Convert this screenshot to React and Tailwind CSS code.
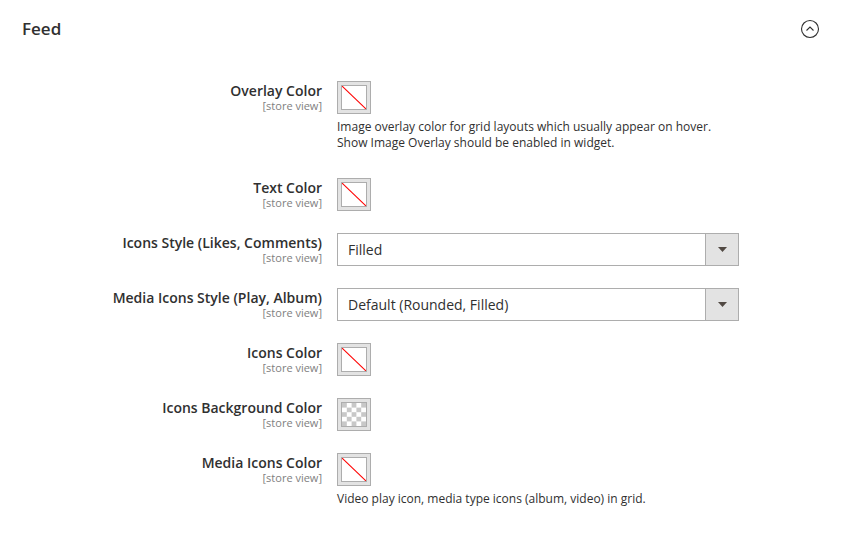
import React from "react";

const rows = [
  { label: "Overlay Color", type: "swatch", note: ["Image overlay color for grid layouts which usually appear on hover.", "Show Image Overlay should be enabled in widget."] },
  { label: "Text Color", type: "swatch" },
  { label: "Icons Style (Likes, Comments)", type: "select", value: "Filled" },
  { label: "Media Icons Style (Play, Album)", type: "select", value: "Default (Rounded, Filled)" },
  { label: "Icons Color", type: "swatch" },
  { label: "Icons Background Color", type: "swatch", transparent: true },
  { label: "Media Icons Color", type: "swatch", note: ["Video play icon, media type icons (album, video) in grid."] },
];

const Swatch = ({ transparent }) => (
  <div className="w-[34px] h-[33px] border border-[#adadad] bg-[#e3e3e3] p-[3px]">
    <div className="w-full h-full border border-[#adadad] bg-white overflow-hidden">
      {transparent ? (
        <svg width="24" height="23" viewBox="0 0 24 23" className="block">
          {Array.from({ length: 25 }).map((_, i) => {
            const r = Math.floor(i / 5);
            const c = i % 5;
            return (r + c) % 2 === 0 ? (
              <rect key={i} x={c * 4.8} y={r * 4.6} width="4.8" height="4.6" fill="#c8c8c8" />
            ) : null;
          })}
        </svg>
      ) : (
        <svg width="24" height="23" viewBox="0 0 24 23" className="block">
          <polygon points="0,0 0.75,0 24,22.3 24,23 23.25,23 0,0.7" fill="#ff0000" />
        </svg>
      )}
    </div>
  </div>
);

const Select = ({ value }) => (
  <div className="w-[402px] h-[33px] border border-[#adadad] bg-white flex items-stretch">
    <div className="flex-1 pl-[10px] flex items-center text-[14px] text-[#303030]">{value}</div>
    <div className="w-[33px] border-l border-[#adadad] bg-[#e3e3e3] flex items-center justify-center">
      <svg width="9" height="5" viewBox="0 0 9 5">
        <path d="M0 0 L9 0 L4.5 5 Z" fill="#514943" />
      </svg>
    </div>
  </div>
);

export default function App() {
  return (
    <div className="w-[850px] h-[546px] bg-white overflow-hidden" style={{ fontFamily: "'Open Sans', sans-serif" }}>
      <div className="flex items-center justify-between pl-[22px] pr-[30px] pt-[16px] h-[42px]">
        <div className="text-[17px] font-semibold text-[#303030] leading-[24px]">Feed</div>
        <svg width="20" height="20" viewBox="0 0 20 20">
          <circle cx="10" cy="10" r="8.5" fill="none" stroke="#303030" strokeWidth="1.1" />
          <path d="M6.5 11.5 L10 8 L13.5 11.5" fill="none" stroke="#303030" strokeWidth="1.1" />
        </svg>
      </div>

      <div className="flex flex-col gap-[22px] pt-[39px]">
        {rows.map((r) => (
          <div key={r.label} className="flex items-start">
            <div className="w-[322px] text-right pt-[1px]">
              <div className="text-[14px] font-semibold text-[#303030] leading-[17px]">{r.label}</div>
              <div className="text-[11px] text-[#808080] leading-[13px]">[store view]</div>
            </div>
            <div className="ml-[15px]">
              {r.type === "swatch" ? <Swatch transparent={r.transparent} /> : <Select value={r.value} />}
              {r.note && (
                <div className="mt-[5px] mb-[5px] text-[12px] leading-[16px] text-[#303030]">
                  {r.note.map((n) => (
                    <div key={n}>{n}</div>
                  ))}
                </div>
              )}
            </div>
          </div>
        ))}
      </div>
    </div>
  );
}
